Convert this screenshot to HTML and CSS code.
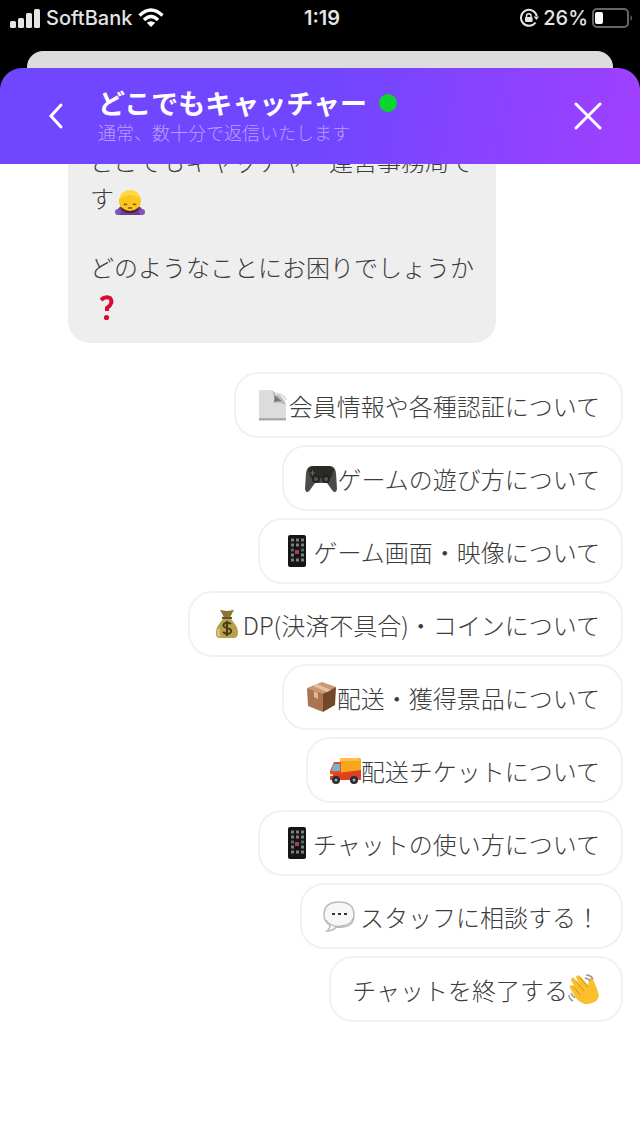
FILE: index.html
```
<!DOCTYPE html>
<html lang="ja">

<head>
	<meta charset="UTF-8">
	<meta name="viewport" content="width=device-width, initial-scale=1.0">
	<title>どこでもキャッチャー</title>
	<link rel="stylesheet" href="styles.css">
</head>

<body>
	<div class="status-bar">
		<div class="status-left">
			<svg class="signal" viewBox="0 0 30 20" fill="#e4e4e4">
				<rect x="0" y="13" width="6" height="7" rx="1.5" />
				<rect x="8" y="10" width="6" height="10" rx="1.5" />
				<rect x="16" y="5" width="6" height="15" rx="1.5" />
				<rect x="24" y="1" width="6" height="19" rx="1.5" />
			</svg>
			<span>SoftBank</span>
			<svg class="wifi" viewBox="0 0 26 20" fill="none" stroke="#fff" stroke-width="3.4">
				<path d="M1.5 7.5Q13-3.5 24.500 7.5" />
				<path d="M6 12Q13 5 20 12" />
				<path d="M13 19L8.800 14.800Q13 11.500 17.200 14.800Z" fill="#fff" stroke="none" />
			</svg>
		</div>
		<time class="clock">1:19</time>
		<div class="status-right">
			<svg class="lock" viewBox="0 0 20 20" fill="none" stroke="#e4e4e4" stroke-width="2">
				<path d="M16.500 14.500A8 8 0 1 1 17.800 8" />
				<path d="M14.500 8.500H20L17.500 12Z" fill="#e4e4e4" stroke="none" />
				<path d="M7.500 9V8a2.300 2.300 0 0 1 4.600 0v1" stroke-width="1.500" />
				<rect x="6" y="9" width="7.600" height="5" rx="1" fill="#e4e4e4" stroke="none" />
			</svg>
			<span>26%</span>
			<svg class="battery" viewBox="0 0 42 20">
				<rect x="1" y="1" width="35" height="18" rx="4" fill="none" stroke="#666" stroke-width="2" />
				<rect x="3" y="4" width="8" height="12" rx="2" fill="#fff" />
				<path d="M38.500 7q3 3 0 6z" fill="#666" />
			</svg>
		</div>
	</div>
	<div class="back-sheet"></div>
	<header class="chat-header">
		<button class="icon-button" aria-label="戻る">
			<svg class="chevron" viewBox="0 0 16 28"><path d="M13 3L3 14L13 25" /></svg>
		</button>
		<div class="heading">
			<h1>どこでもキャッチャー<span class="online"></span></h1>
			<p>通常、数十分で返信いたします</p>
		</div>
		<button class="icon-button" aria-label="閉じる">
			<svg class="cross" viewBox="0 0 28 28"><path d="M2 2L26 26M26 2L2 26" /></svg>
		</button>
	</header>
	<main class="chat">
		<div class="bubble">
			<p>どこでもキャッチャー運営事務局です<svg class="emoji" viewBox="0 0 32 32">
					<path d="M3 29q-1-7 5-9l8 3 8-3q6 2 5 9z" fill="#6a3d9c" />
					<path d="M7 22Q5 6 16 6t9 16q-2 5-9 5t-9-5z" fill="#4a2520" />
					<ellipse cx="16" cy="15" rx="11" ry="10" fill="#fbc51f" />
					<path d="M6 13Q7 4 16 4t10 9q-5-4-10-4T6 13z" fill="#ffd93b" />
					<path d="M10 18q2 1 3 0m6 0q2 1 3 0m-8 4h4" fill="none" stroke="#8a5012" stroke-width="1.500" />
					<circle cx="4" cy="26" r="3" fill="#8650bd" />
					<circle cx="28" cy="26" r="3" fill="#8650bd" />
				</svg></p>
			<p>どのようなことにお困りでしょうか<svg class="emoji" viewBox="0 0 32 32">
					<path d="M11 9Q15 5 20 7Q24 12 17 17V20" fill="none" stroke="#d90b32" stroke-width="4" />
					<circle cx="16.500" cy="26.500" r="2.600" fill="#d90b32" />
				</svg></p>
		</div>
		<div class="options">
			<button class="option"><svg class="emoji" viewBox="0 0 32 32">
					<path d="M2 31V1h12l15 14v16z" fill="#dcdcdc" />
					<path d="M2 29h27v2.500H2z" fill="#aaa" />
					<path d="M14 1q4 5 3 13 6-1 12 2-1-8-15-15z" fill="#bdbdbd" />
					<path d="M17 13q1-5 0-7l8 6q-4 0-8 1z" fill="#777" />
					<path d="M18 5q8-1 11 6" fill="none" stroke="#ddd" stroke-width="2" />
				</svg>会員情報や各種認証について</button>
			<button class="option"><svg class="emoji" viewBox="0 0 32 32">
					<path d="M1 11Q2 4 7 4h18q5 0 6 7l1 16q-1 6-5 1l-5-7H10l-5 7q-4 5-5-1z" fill="#4c4c4a" />
					<path d="M3 8q2-4 6-4h14q4 0 6 4l-3 8H6z" fill="#292b27" />
					<circle cx="11" cy="17" r="4" fill="#222" />
					<circle cx="21" cy="17" r="4" fill="#222" />
					<circle cx="11" cy="17" r="2" fill="#555" />
					<circle cx="21" cy="17" r="2" fill="#555" />
					<path d="M5 11h5M7.500 8.500v5" stroke="#666" />
				</svg>ゲームの遊び方について</button>
			<button class="option"><svg class="emoji" viewBox="0 0 32 32">
					<rect x="7" y="0" width="18" height="32" rx="2" fill="#151515" />
					<path d="M10 5h3m2 0h3m2 0h3M10 10h3m2 0h3m2 0h3M10 20h3m7 0h3M10 25h3m2 0h3m2 0h3" stroke="#78827a" stroke-width="3" />
					<path d="M10 15h3m7 0h3" stroke="#476f65" stroke-width="3" />
					<path d="M14 15h4v4h-4z" fill="#a83c61" />
				</svg>ゲーム画面・映像について</button>
			<button class="option"><svg class="emoji" viewBox="0 0 32 32">
					<path d="M10 2q6 2 12 0l-3 8q9 9 8 16-1 4-4 4H9q-4 0-4-4-1-7 8-16z" fill="#b9a04b" />
					<path d="M9 2q7 2 14 0l-4 7h-6z" fill="#8b7734" />
					<path d="M11 10h10" stroke="#665622" stroke-width="2" />
					<path d="M20 16q-4-3-7 0-2 3 3 4t4 4q-3 4-8 0M16 13v15" fill="none" stroke="#423a19" stroke-width="2" />
					<path d="M8 21q-2 5 1 7" fill="none" stroke="#e2cf78" stroke-width="2" />
				</svg>DP(決済不具合)・コインについて</button>
			<button class="option"><svg class="emoji" viewBox="0 0 32 32">
					<path d="M2 7L17 1l14 5-13 8z" fill="#c79872" />
					<path d="M2 7l16 6v18L3 25z" fill="#a97551" />
					<path d="M18 13l13-7-1 18-12 7z" fill="#754728" />
					<path d="M8 5l4-2 14 6-4 2z" fill="#e2c4a3" />
					<path d="M9 10l4 2v6l-4-2z" fill="#ddb997" />
				</svg>配送・獲得景品について</button>
			<button class="option"><svg class="emoji" viewBox="0 0 32 32">
					<path d="M11 4h19q2 0 2 2v19H11z" fill="#f9a51e" />
					<path d="M11 4h19v3H11z" fill="#ffc04a" />
					<path d="M5 8h7v18H1v-9z" fill="#e84b27" />
					<path d="M5 10h6v7H2z" fill="#72b5d6" />
					<path d="M1 20l31-4v10H1z" fill="#dc4222" />
					<circle cx="7" cy="26" r="4" fill="#292b30" />
					<circle cx="25" cy="26" r="4" fill="#292b30" />
					<circle cx="7" cy="26" r="1.500" fill="#aaa" />
					<circle cx="25" cy="26" r="1.500" fill="#aaa" />
					<path d="M1 21h3" stroke="#ffe17a" stroke-width="2" />
				</svg>配送チケットについて</button>
			<button class="option"><svg class="emoji" viewBox="0 0 32 32">
					<rect x="7" y="0" width="18" height="32" rx="2" fill="#151515" />
					<path d="M10 5h3m2 0h3m2 0h3M10 10h3m2 0h3m2 0h3M10 20h3m7 0h3M10 25h3m2 0h3m2 0h3" stroke="#78827a" stroke-width="3" />
					<path d="M10 15h3m7 0h3" stroke="#476f65" stroke-width="3" />
					<path d="M14 15h4v4h-4z" fill="#a83c61" />
				</svg>チャットの使い方について</button>
			<button class="option"><svg class="emoji" viewBox="0 0 32 32">
					<path d="M16 2C6 2 1 7 1 15q0 7 6 10 0 4-3 6 6 0 9-4 18 2 18-12Q31 2 16 2z" fill="#f7f7f7" stroke="#bbb" stroke-width="1.500" />
					<path d="M3 20q6 8 15 6 10-1 12-8" fill="none" stroke="#aaa" />
					<path d="M9 14h3m3 0h3m3 0h3" stroke="#333" stroke-width="2" />
				</svg>&nbsp;スタッフに相談する！</button>
			<button class="option">チャットを終了する<svg class="emoji" viewBox="0 0 32 32">
					<path d="M7 24L2 15q-1-3 2-3l3 3-4-8q0-3 3-2l5 6-3-7q1-3 4-1l8 9 1-5q1-4 4-1l4 10q5 11-5 14-9 4-17-6z" fill="#f9bf2c" />
					<path d="M5 13l7 9M8 8l8 10M12 5l8 9" fill="none" stroke="#d99215" />
					<path d="M18 2q5 0 7 4M17 5q4 1 5 3" fill="none" stroke="#a48da0" stroke-width="1.500" />
					<path d="M1 22q0 4 4 6m-2-8q1 3 4 5" fill="none" stroke="#999" stroke-width="1.500" />
				</svg></button>
		</div>
	</main>
</body>

</html>
```

FILE: styles.css
```
* {
	box-sizing: border-box;
}

body {
	--text: #3c3c3c;
	display: flex;
	flex-direction: column;
	height: 100vh;
	margin: 0;
	background: linear-gradient(#000 120px, #fff 120px);
	color: var(--text);
	font-family: "Noto Sans CJK JP", sans-serif;
	font-size: 24px;
	font-weight: 300;
}

h1, p {
	margin: 0;
}

svg {
	flex: none;
}

button {
	font: inherit;
	color: inherit;
	cursor: pointer;
}

.status-bar {
	display: grid;
	grid-template-columns: 1fr auto 1fr;
	align-items: center;
	flex: none;
	height: 51px;
	padding: 0 6px 16px 10px;
	color: #e4e4e4;
	font-family: Inter, sans-serif;
	font-size: 20px;
	font-weight: 500;
}

.status-left, .status-right {
	display: flex;
	align-items: center;
	gap: 6px;
}

.status-right {
	justify-content: flex-end;
	gap: 4px;
}

.clock {
	font-weight: 600;
}

.signal {
	width: 30px;
	height: 20px;
}

.wifi {
	width: 26px;
	height: 20px;
}

.lock {
	width: 20px;
	height: 20px;
}

.battery {
	width: 42px;
	height: 20px;
}

.back-sheet {
	flex: none;
	height: 17px;
	margin: 0 27px;
	border-radius: 16px 16px 0 0;
	background: #dfdcde;
}

.chat-header {
	display: flex;
	align-items: center;
	flex: none;
	height: 96px;
	padding: 0 28px 0 32px;
	border-radius: 22px 22px 0 0;
	background: linear-gradient(100deg, #7046ff 50%, #a040ff);
	color: #fff;
	z-index: 1;
}

.icon-button {
	display: flex;
	align-items: center;
	justify-content: center;
	width: 48px;
	height: 48px;
	padding: 0;
	border: 0;
	background: none;
}

.icon-button svg {
	fill: none;
	stroke: #fff;
	stroke-width: 3;
	stroke-linecap: round;
}

.chevron {
	width: 16px;
	height: 28px;
}

.cross {
	width: 28px;
	height: 28px;
}

.heading {
	flex: 1;
	padding-left: 18px;
}

.heading h1 {
	display: flex;
	align-items: center;
	gap: 12px;
	font-size: 27px;
	font-weight: 700;
	line-height: 32px;
}

.heading p {
	color: #b8a0ff;
	font-size: 18px;
	line-height: 26px;
}

.online {
	width: 18px;
	height: 18px;
	border-radius: 50%;
	background: #0bd62e;
}

/* stays scrolled to the newest message */
.chat {
	display: flex;
	flex: 1;
	flex-direction: column;
	justify-content: flex-end;
	gap: 29px;
	min-height: 0;
	overflow: hidden;
	padding: 0 17px 116px 68px;
	background: #fff;
}

.bubble {
	align-self: flex-start;
	max-width: 428px;
	padding: 20px 22px;
	border-radius: 22px;
	background: #eee;
	line-height: 37px;
}

.bubble p + p {
	margin-top: 30px;
}

.emoji {
	width: 32px;
	height: 32px;
}

.bubble .emoji {
	vertical-align: middle;
}

.options {
	display: flex;
	flex-direction: column;
	align-items: flex-end;
	gap: 7px;
}

.option {
	display: flex;
	align-items: center;
	height: 66px;
	padding: 0 21px;
	border: 2px solid #f1f1f1;
	border-radius: 24px;
	background: #fff;
	white-space: nowrap;
}
```
